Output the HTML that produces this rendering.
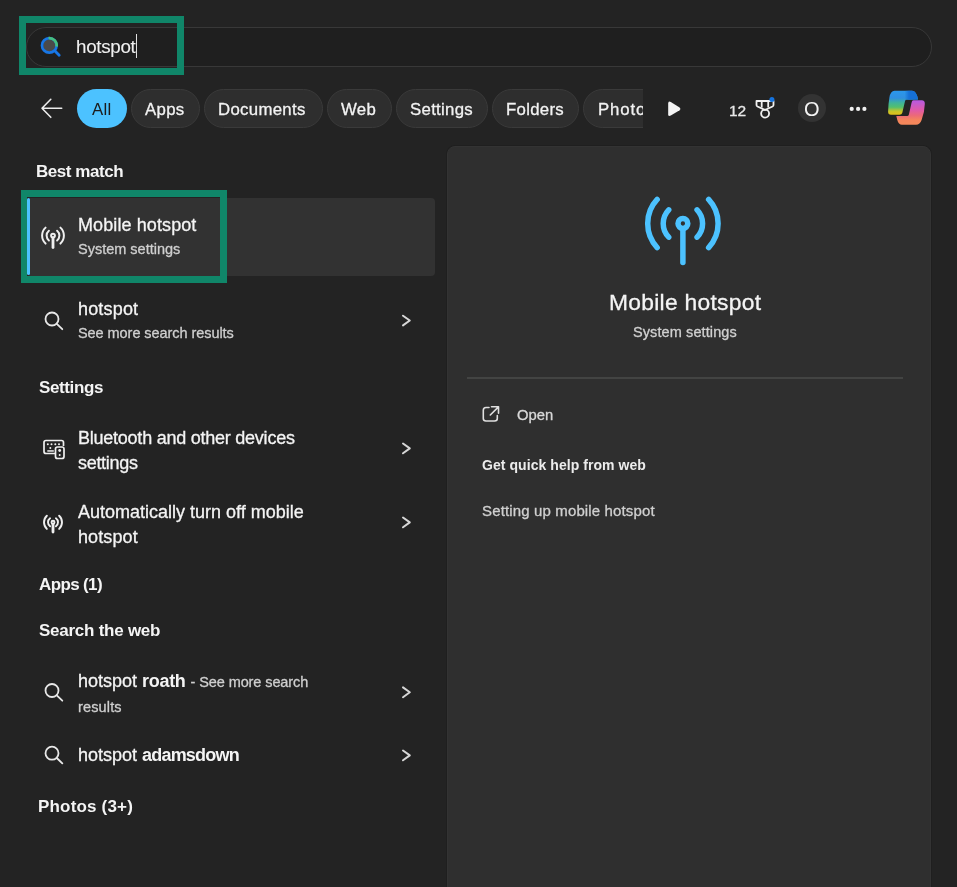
<!DOCTYPE html>
<html><head><meta charset="utf-8">
<style>
html,body{margin:0;padding:0;}
body{width:957px;height:887px;overflow:hidden;background:#232323;position:relative;font-family:"Liberation Sans",sans-serif;color:#fff;}
.a{position:absolute;}
.t{position:absolute;white-space:nowrap;line-height:1;will-change:transform;-webkit-text-stroke:0.3px currentColor;}
.pill{position:absolute;top:89px;height:37px;border:1px solid #3a3a3a;background:#2e2e2e;border-radius:20px;box-sizing:content-box;}
.pt{position:absolute;white-space:nowrap;line-height:1;font-size:16.8px;letter-spacing:0.3px;color:#f2f2f2;will-change:transform;-webkit-text-stroke:0.3px currentColor;}
svg{position:absolute;overflow:visible;}
.t b,.t.bd{-webkit-text-stroke:0;}
</style></head>
<body>
<!-- search bar -->
<div class="a" style="left:26px;top:27px;width:904px;height:38px;border:1px solid #383838;background:#1f1f1f;border-radius:20px;"></div>
<!-- green highlight box -->
<div class="a" style="left:19px;top:16px;width:151px;height:45px;border:7px solid #108669;"></div>
<!-- search icon -->
<svg style="left:0;top:0" width="957" height="887">
  <circle cx="49.3" cy="45.4" r="6.2" fill="#4a4a4a"/>
  <circle cx="49.3" cy="45.4" r="7.3" fill="none" stroke="#1877e6" stroke-width="2.7"/>
  <path d="M48.6 38.1 A7.3 7.3 0 0 1 56.55 46.6" stroke="#47c07f" stroke-width="2.7" fill="none"/>
  <line x1="55" y1="51" x2="59.2" y2="55.3" stroke="#1877e6" stroke-width="2.8" stroke-linecap="round"/>
</svg>
<div class="t" style="left:75.8px;top:37.6px;font-size:18.8px;letter-spacing:-0.3px;color:#f0f0f0;-webkit-text-stroke:0.1px currentColor;">hotspot</div>
<div class="a" style="left:136px;top:34px;width:1px;height:24px;background:#e0e0e0;"></div>

<!-- back arrow -->
<svg style="left:0;top:0" width="957" height="887">
  <path d="M42 108.3 H61.7 M50.8 99.3 L42 108.3 L50.8 117.3" stroke="#ececec" stroke-width="1.6" fill="none" stroke-linecap="round" stroke-linejoin="round"/>
</svg>

<!-- pills -->
<div class="a" style="left:77px;top:89px;width:50px;height:39px;background:#4cc2ff;border-radius:20px;"></div>
<div class="pt" style="left:91.8px;top:101.6px;color:#1b1b1b;-webkit-text-stroke:0;">All</div>
<div class="pill" style="left:131px;width:67px;"></div>
<div class="pt" style="left:145px;top:101.6px;">Apps</div>
<div class="pill" style="left:204px;width:117px;"></div>
<div class="pt" style="left:218px;top:101.6px;">Documents</div>
<div class="pill" style="left:327px;width:63px;"></div>
<div class="pt" style="left:341px;top:101.6px;">Web</div>
<div class="pill" style="left:396px;width:90px;"></div>
<div class="pt" style="left:410px;top:101.6px;">Settings</div>
<div class="pill" style="left:492px;width:85px;"></div>
<div class="pt" style="left:506px;top:101.6px;">Folders</div>
<div class="a" style="left:583px;top:89px;width:59.5px;height:39px;overflow:hidden;">
  <div class="pill" style="left:0;top:0;width:90px;"></div>
  <div class="pt" style="left:14.5px;top:12.6px;letter-spacing:0.9px;">Photos</div>
</div>
<!-- play -->
<svg style="left:0;top:0" width="957" height="887">
  <path d="M668.2 103.5 Q668.2 100.6 670.8 102.1 L679.6 107.4 Q681.4 108.8 679.6 110.2 L670.8 115.6 Q668.2 117 668.2 114.2 Z" fill="#f4f4f4"/>
</svg>
<div class="t" style="left:728.5px;top:102.7px;font-size:15.5px;color:#e8e8e8;">12</div>
<!-- medal -->
<svg style="left:0;top:0" width="957" height="887">
  <path d="M756.5 101 H773.5 V105 Q773.5 106 772.5 106.5 L765 110 L757.5 106.5 Q756.5 106 756.5 105 Z" stroke="#f0f0f0" stroke-width="1.8" fill="none" stroke-linejoin="round"/>
  <line x1="761.7" y1="101" x2="761.7" y2="107.5" stroke="#f0f0f0" stroke-width="1.8"/>
  <line x1="768.2" y1="101" x2="768.2" y2="107.5" stroke="#f0f0f0" stroke-width="1.8"/>
  <circle cx="765.1" cy="113.6" r="4" stroke="#f0f0f0" stroke-width="1.8" fill="none"/>
  <circle cx="771.9" cy="99.4" r="2.5" fill="#1473e0"/>
</svg>
<!-- avatar -->
<div class="a" style="left:798px;top:94px;width:28px;height:28px;border-radius:50%;background:#333333;"></div>
<div class="t bd" style="left:804.3px;top:99px;font-size:20px;color:#f4f4f4;">O</div>
<!-- dots -->
<svg style="left:0;top:0" width="957" height="887">
  <circle cx="851.7" cy="108.9" r="2.1" fill="#f0f0f0"/>
  <circle cx="858.1" cy="108.9" r="2.1" fill="#f0f0f0"/>
  <circle cx="864.4" cy="108.9" r="2.1" fill="#f0f0f0"/>
</svg>
<!-- copilot -->
<svg style="left:880px;top:85px" width="52" height="45" viewBox="0 0 52 45">
  <defs>
    <linearGradient id="gl" x1="0" y1="0" x2="0" y2="1">
      <stop offset="0" stop-color="#2b97ec"/>
      <stop offset="0.3" stop-color="#2f8fe0"/>
      <stop offset="0.5" stop-color="#3fb39a"/>
      <stop offset="0.68" stop-color="#52bf6e"/>
      <stop offset="0.85" stop-color="#c8c42a"/>
      <stop offset="1" stop-color="#e3c018"/>
    </linearGradient>
    <linearGradient id="gt" x1="0" y1="0" x2="1" y2="0">
      <stop offset="0" stop-color="#1e88e5" stop-opacity="0"/>
      <stop offset="0.55" stop-color="#1570d6" stop-opacity="0"/>
      <stop offset="0.7" stop-color="#1570d6" stop-opacity="1"/>
      <stop offset="1" stop-color="#1570d6" stop-opacity="1"/>
    </linearGradient>
    <linearGradient id="gr" x1="0" y1="0" x2="0" y2="1">
      <stop offset="0" stop-color="#b65ae2"/>
      <stop offset="0.4" stop-color="#e05aa8"/>
      <stop offset="0.62" stop-color="#ec6a78"/>
      <stop offset="0.8" stop-color="#f4845c"/>
      <stop offset="1" stop-color="#f4885a"/>
    </linearGradient>
  </defs>
  <path d="M14.5 5.8 L32 5.8 Q36.5 5.8 38 14.6 L26.5 14.8 Q25.3 14.8 25 16.2 L22.3 27.8 Q21.8 29.8 19.5 29.8 L11 29.8 Q8 29.8 8.1 26.5 Q8.3 19 9.4 12.5 Q10.6 5.8 14.5 5.8 Z" fill="url(#gl)"/>
  <path d="M14.5 5.8 L32 5.8 Q36.5 5.8 38 14.6 L26.5 14.8 Q25.3 14.8 25 16.2 L22.3 27.8 Q21.8 29.8 19.5 29.8 L11 29.8 Q8 29.8 8.1 26.5 Q8.3 19 9.4 12.5 Q10.6 5.8 14.5 5.8 Z" fill="url(#gt)"/>
  <path d="M33.5 15.3 L41.8 15.3 Q45 15.3 44.8 19 Q44.6 27 41.6 35 Q40 39.8 36 39.8 L22 39.8 Q18.5 39.8 17.3 35 L16.3 31 L27.2 31 Q28.5 31 28.9 29.5 L31.6 17.5 Q32 15.3 33.5 15.3 Z" fill="url(#gr)"/>
</svg>

<!-- left list -->
<div class="t bd" style="left:35.8px;top:163.1px;font-size:17px;font-weight:700;letter-spacing:-0.45px;color:#f4f4f4;">Best match</div>
<div class="a" style="left:27px;top:198px;width:408px;height:78px;background:#323232;border-radius:4px;"></div>
<div class="a" style="left:27px;top:198px;width:3px;height:77px;background:#4cc2ff;border-radius:2px;"></div>
<div class="a" style="left:21px;top:190px;width:193px;height:79px;border:7px solid #108669;border-left-width:6px;"></div>
<!-- hotspot icon small -->
<svg style="left:0;top:0" width="957" height="887">
  <g stroke="#efefef" stroke-width="2.0" fill="none" stroke-linecap="round">
    <circle cx="53" cy="235.6" r="1.9"/>
    <line x1="53" y1="238.0" x2="53" y2="247.6" stroke-width="2.8"/>
    <path d="M48.89 230.70 A6.4 6.4 0 0 0 48.89 240.50 M57.11 230.70 A6.4 6.4 0 0 1 57.11 240.50"/>
    <path d="M45.57 227.63 A10.9 10.9 0 0 0 45.57 243.57 M60.43 227.63 A10.9 10.9 0 0 1 60.43 243.57"/>
  </g>
</svg>
<div class="t" style="left:77.5px;top:215.5px;font-size:18px;letter-spacing:0.1px;color:#f4f4f4;">Mobile hotspot</div>
<div class="t" style="left:78px;top:242px;font-size:14.5px;color:#cfcfcf;">System settings</div>

<!-- hotspot search row -->
<svg style="left:0;top:0" width="957" height="887">
  <g stroke="#e8e8e8" stroke-width="1.8" fill="none" stroke-linecap="round">
    <circle cx="52" cy="319" r="6.5"/>
    <line x1="56.8" y1="323.8" x2="62.3" y2="329.2"/>
  </g>
  <path d="M403 315.7 L409.8 320.5 L403 325.4" stroke="#d6d6d6" stroke-width="2" fill="none" stroke-linecap="round" stroke-linejoin="round"/>
</svg>
<div class="t" style="left:77.5px;top:299.5px;font-size:18px;letter-spacing:0.17px;color:#f4f4f4;">hotspot</div>
<div class="t" style="left:78px;top:325.5px;font-size:14.5px;letter-spacing:-0.06px;color:#cfcfcf;">See more search results</div>

<div class="t bd" style="left:38.5px;top:379.4px;font-size:17px;font-weight:700;letter-spacing:-0.39px;color:#f4f4f4;">Settings</div>
<!-- bluetooth icon -->
<svg style="left:0;top:0" width="957" height="887">
  <g stroke="#efefef" stroke-width="1.7" fill="none" stroke-linejoin="round">
    <path d="M55 453.5 H46 Q44 453.5 44 451.5 V442.5 Q44 440.5 46 440.5 H61.5 Q63.5 440.5 63.5 442.5 V446"/>
    <rect x="55.5" y="447" width="8.5" height="11.5" rx="2"/>
  </g>
  <g fill="#efefef">
    <circle cx="47.8" cy="444.2" r="1"/><circle cx="51.5" cy="444.2" r="1"/><circle cx="55.3" cy="444.2" r="1"/><circle cx="59" cy="444.2" r="1"/>
    <circle cx="50.3" cy="448" r="1"/>
    <rect x="47.3" y="450.2" width="6.5" height="1.5"/>
    <circle cx="59.7" cy="450.5" r="1.4"/><circle cx="59.7" cy="455" r="1"/>
  </g>
  <path d="M403 443.5 L409.8 448.4 L403 453.3" stroke="#d6d6d6" stroke-width="2" fill="none" stroke-linecap="round" stroke-linejoin="round"/>
</svg>
<div class="t" style="left:78px;top:429px;font-size:18px;letter-spacing:-0.24px;color:#f4f4f4;">Bluetooth and other devices</div>
<div class="t" style="left:77.7px;top:453.5px;font-size:18px;letter-spacing:-0.3px;color:#f4f4f4;">settings</div>

<svg style="left:0;top:0" width="957" height="887">
  <g stroke="#efefef" stroke-width="1.9" fill="none" stroke-linecap="round">
    <circle cx="53" cy="522.3" r="1.5"/>
    <line x1="53" y1="524.3" x2="53" y2="532" stroke-width="2.8"/>
    <path d="M50.06 518.25 A5.0 5.0 0 0 0 50.06 526.35 M55.94 518.25 A5.0 5.0 0 0 1 55.94 526.35"/>
    <path d="M46.86 515.72 A9.0 9.0 0 0 0 46.86 528.88 M59.14 515.72 A9.0 9.0 0 0 1 59.14 528.88"/>
  </g>
  <path d="M403 517.5 L409.8 522.4 L403 527.3" stroke="#d6d6d6" stroke-width="2" fill="none" stroke-linecap="round" stroke-linejoin="round"/>
</svg>
<div class="t" style="left:78px;top:503px;font-size:18px;color:#f4f4f4;">Automatically turn off mobile</div>
<div class="t" style="left:77.5px;top:527.5px;font-size:18px;letter-spacing:0.1px;color:#f4f4f4;">hotspot</div>

<div class="t bd" style="left:39px;top:576.4px;font-size:17px;font-weight:700;letter-spacing:-0.63px;color:#f4f4f4;">Apps (1)</div>
<div class="t bd" style="left:39px;top:622.2px;font-size:17px;font-weight:700;letter-spacing:-0.25px;color:#f4f4f4;">Search the web</div>

<svg style="left:0;top:0" width="957" height="887">
  <g stroke="#e8e8e8" stroke-width="1.8" fill="none" stroke-linecap="round">
    <circle cx="52" cy="690.5" r="6.5"/>
    <line x1="56.8" y1="695.3" x2="62.3" y2="700.7"/>
    <circle cx="52" cy="753.2" r="6.5"/>
    <line x1="56.8" y1="758" x2="62.3" y2="763.4"/>
  </g>
  <path d="M403 687.4 L409.8 692.3 L403 697.2" stroke="#d6d6d6" stroke-width="2" fill="none" stroke-linecap="round" stroke-linejoin="round"/>
  <path d="M403 750.5 L409.8 755.4 L403 760.3" stroke="#d6d6d6" stroke-width="2" fill="none" stroke-linecap="round" stroke-linejoin="round"/>
</svg>
<div class="t" style="left:78px;top:671.5px;font-size:18px;color:#f4f4f4;">hotspot <b style="letter-spacing:-0.3px">roath</b> <span style="font-size:14.5px;letter-spacing:-0.1px;color:#cfcfcf;">- See more search</span></div>
<div class="t" style="left:77.5px;top:699.5px;font-size:14.5px;letter-spacing:0.14px;color:#cfcfcf;">results</div>
<div class="t" style="left:78px;top:745.5px;font-size:18px;color:#f4f4f4;">hotspot <b style="letter-spacing:-0.8px">adamsdown</b></div>

<div class="t bd" style="left:38px;top:797.5px;font-size:17px;font-weight:700;letter-spacing:0.18px;color:#f4f4f4;">Photos (3+)</div>

<!-- right panel -->
<div class="a" style="left:447px;top:146px;width:482px;height:760px;background:#2f2f2f;border:1px solid #333333;border-radius:8px;box-shadow:0 0 0 1px #1f1f1f;"></div>
<svg style="left:0;top:0" width="957" height="887">
  <g stroke="#4cc2ff" stroke-width="5.5" fill="none" stroke-linecap="round">
    <circle cx="682.9" cy="223.5" r="4.9"/>
    <line x1="682.9" y1="230" x2="682.9" y2="262.5"/>
    <path d="M668.73 209.82 A19.7 19.7 0 0 0 668.73 237.18 M697.07 209.82 A19.7 19.7 0 0 1 697.07 237.18"/>
    <path d="M657.16 199.49 A35.2 35.2 0 0 0 657.16 247.51 M708.64 199.49 A35.2 35.2 0 0 1 708.64 247.51"/>
  </g>
</svg>
<div class="t" style="left:608.7px;top:290.8px;font-size:22.8px;letter-spacing:0.29px;color:#f4f4f4;">Mobile hotspot</div>
<div class="t" style="left:633px;top:324.5px;font-size:14.5px;letter-spacing:0.1px;color:#d0d0d0;">System settings</div>
<div class="a" style="left:467px;top:377px;width:436px;height:2px;background:#434443;"></div>
<svg style="left:0;top:0" width="957" height="887">
  <g stroke="#e0e0e0" stroke-width="1.6" fill="none" stroke-linecap="round" stroke-linejoin="round">
    <path d="M489 407.5 H486 Q483.3 407.5 483.3 410.2 V418.5 Q483.3 421 486 421 H494.5 Q497.3 421 497.3 418.5 V415.5"/>
    <path d="M491.5 406.8 H498.5 V413.3 M498.2 407.1 L490.3 415"/>
  </g>
</svg>
<div class="t" style="left:517px;top:407.5px;font-size:14.8px;color:#d8d8d8;">Open</div>
<div class="t bd" style="left:482px;top:457.5px;font-size:14px;font-weight:700;letter-spacing:0.06px;color:#ececec;">Get quick help from web</div>
<div class="t" style="left:482.3px;top:502.5px;font-size:15px;letter-spacing:0.14px;color:#d0d0d0;">Setting up mobile hotspot</div>
</body></html>
